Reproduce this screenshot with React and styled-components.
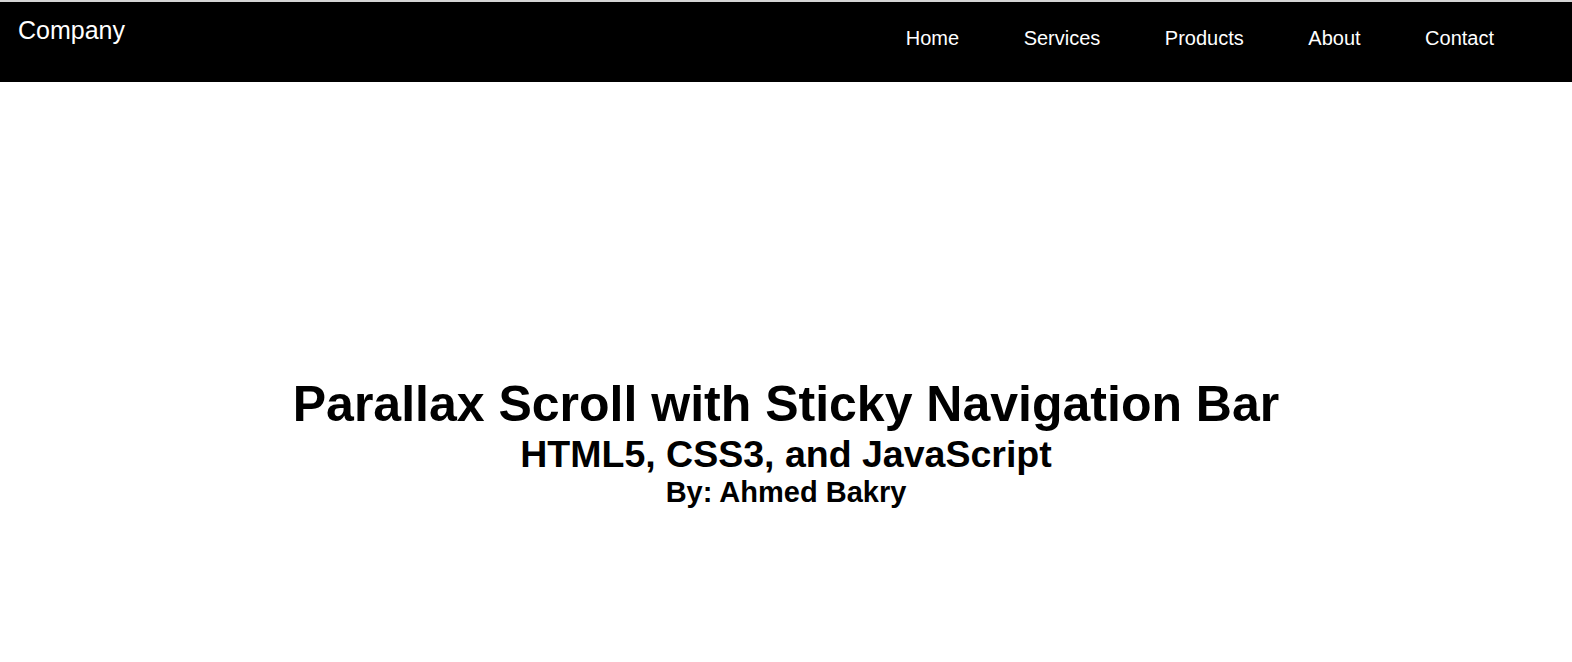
import React from 'react'
import styled, { createGlobalStyle } from 'styled-components'

const GlobalStyle = createGlobalStyle`
  html, body {
    margin: 0;
    padding: 0;
    background: #ffffff;
    font-family: "Liberation Sans", Arial, sans-serif;
    overflow: hidden;
  }
`

const links = ['Home', 'Services', 'Products', 'About', 'Contact']

export default function App() {
  return (
    <>
      <GlobalStyle />
      <Page>
        <Nav>
          <Brand>Company</Brand>
          <Menu>
            {links.map((l) => (
              <MenuItem key={l}>{l}</MenuItem>
            ))}
          </Menu>
        </Nav>
        <Hero>
          <Title>Parallax Scroll with Sticky Navigation Bar</Title>
          <Subtitle>HTML5, CSS3, and JavaScript</Subtitle>
          <Author>By: Ahmed Bakry</Author>
        </Hero>
      </Page>
    </>
  )
}

const Page = styled.div`
  border-top: 2px solid #d4d4d4;
  height: 660px;
  display: flex;
  flex-direction: column;
`

const Nav = styled.nav`
  height: 80px;
  background-color: #000000;
  display: flex;
  justify-content: space-between;
  align-items: flex-start;
  padding: 0 16px 0 18px;
`

const Brand = styled.div`
  color: #ffffff;
  font-size: 25px;
  margin-top: 14px;
`

const Menu = styled.ul`
  list-style: none;
  margin: 25px 62px 0 0;
  padding: 0;
  display: flex;
  gap: 64.5px;
`

const MenuItem = styled.li`
  color: #ffffff;
  font-size: 20px;
`

const Hero = styled.section`
  flex: 1;
  display: flex;
  flex-direction: column;
  align-items: center;
  padding-top: 294px;
  color: #000000;
  font-weight: bold;
`

const Title = styled.h1`
  margin: 0;
  font-size: 50px;
  line-height: 57px;
`

const Subtitle = styled.h2`
  margin: 0;
  font-size: 37.5px;
  line-height: 43px;
`

const Author = styled.h3`
  margin: 0;
  font-size: 29px;
  line-height: 32px;
`
